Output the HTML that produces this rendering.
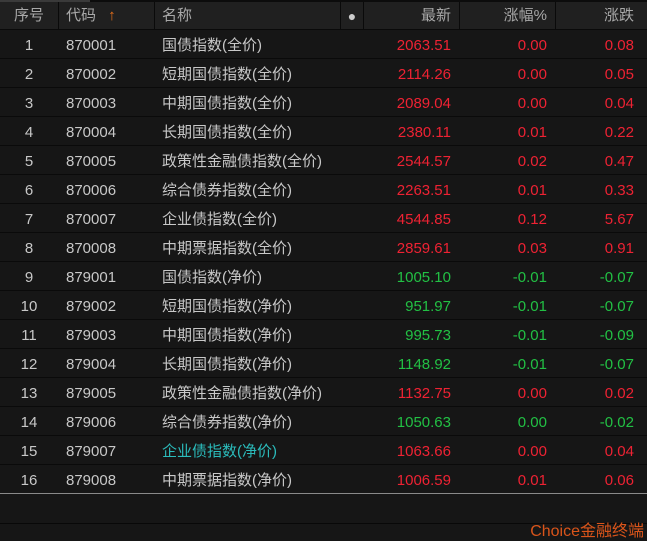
<!DOCTYPE html><html><head><meta charset="utf-8"><style>
*{margin:0;padding:0;box-sizing:border-box}
body{width:647px;height:539px;background:#161616;overflow:hidden;position:relative;font-family:"Liberation Sans","Noto Sans CJK SC",sans-serif;font-size:15px;color:#c8c8c8}
.top{position:absolute;left:0;top:0;width:647px;height:2px;background:#0c0c0c}
.top i{position:absolute;left:0;top:0;width:90px;height:2px;background:#3a3a3a}
.hd{position:absolute;left:0;top:2px;width:647px;height:28px;background:#202020;border-bottom:1px solid #0a0a0a;color:#a8a8a8}
.hd div{position:absolute;top:0;height:27px;line-height:28px;border-right:1px solid #0a0a0a}
.r{position:absolute;left:0;width:647px;height:29px;line-height:31px;border-bottom:1px solid #0a0a0a}
.r span{position:absolute;top:0}
.a{left:0;width:58px;text-align:center}
.b{left:66px}
.c{left:162px}
.d{right:196px}
.e{right:100px}
.f{right:13px}
.R{color:#ee2233}.G{color:#22c044}.T{color:#2bbcbc}
</style></head><body>
<div class="top"><i></i></div>
<div class="hd">
<div style="left:0;width:59px;text-align:center">序号</div>
<div style="left:59px;width:96px;padding-left:7px">代码 <span style="color:#e8701a;margin-left:8px">↑</span></div>
<div style="left:155px;width:186px;padding-left:7px">名称</div>
<div style="left:341px;width:23px;text-align:center;font-size:14px;color:#ccc">●</div>
<div style="left:364px;width:96px;text-align:right;padding-right:8px">最新</div>
<div style="left:460px;width:96px;text-align:right;padding-right:8px">涨幅%</div>
<div style="left:556px;width:91px;text-align:right;padding-right:13px;border-right:none">涨跌</div>
</div>
<div class="r" style="top:30px"><span class="a">1</span><span class="b">870001</span><span class="c">国债指数(全价)</span><span class="d R">2063.51</span><span class="e R">0.00</span><span class="f R">0.08</span></div>
<div class="r" style="top:59px"><span class="a">2</span><span class="b">870002</span><span class="c">短期国债指数(全价)</span><span class="d R">2114.26</span><span class="e R">0.00</span><span class="f R">0.05</span></div>
<div class="r" style="top:88px"><span class="a">3</span><span class="b">870003</span><span class="c">中期国债指数(全价)</span><span class="d R">2089.04</span><span class="e R">0.00</span><span class="f R">0.04</span></div>
<div class="r" style="top:117px"><span class="a">4</span><span class="b">870004</span><span class="c">长期国债指数(全价)</span><span class="d R">2380.11</span><span class="e R">0.01</span><span class="f R">0.22</span></div>
<div class="r" style="top:146px"><span class="a">5</span><span class="b">870005</span><span class="c">政策性金融债指数(全价)</span><span class="d R">2544.57</span><span class="e R">0.02</span><span class="f R">0.47</span></div>
<div class="r" style="top:175px"><span class="a">6</span><span class="b">870006</span><span class="c">综合债券指数(全价)</span><span class="d R">2263.51</span><span class="e R">0.01</span><span class="f R">0.33</span></div>
<div class="r" style="top:204px"><span class="a">7</span><span class="b">870007</span><span class="c">企业债指数(全价)</span><span class="d R">4544.85</span><span class="e R">0.12</span><span class="f R">5.67</span></div>
<div class="r" style="top:233px"><span class="a">8</span><span class="b">870008</span><span class="c">中期票据指数(全价)</span><span class="d R">2859.61</span><span class="e R">0.03</span><span class="f R">0.91</span></div>
<div class="r" style="top:262px"><span class="a">9</span><span class="b">879001</span><span class="c">国债指数(净价)</span><span class="d G">1005.10</span><span class="e G">-0.01</span><span class="f G">-0.07</span></div>
<div class="r" style="top:291px"><span class="a">10</span><span class="b">879002</span><span class="c">短期国债指数(净价)</span><span class="d G">951.97</span><span class="e G">-0.01</span><span class="f G">-0.07</span></div>
<div class="r" style="top:320px"><span class="a">11</span><span class="b">879003</span><span class="c">中期国债指数(净价)</span><span class="d G">995.73</span><span class="e G">-0.01</span><span class="f G">-0.09</span></div>
<div class="r" style="top:349px"><span class="a">12</span><span class="b">879004</span><span class="c">长期国债指数(净价)</span><span class="d G">1148.92</span><span class="e G">-0.01</span><span class="f G">-0.07</span></div>
<div class="r" style="top:378px"><span class="a">13</span><span class="b">879005</span><span class="c">政策性金融债指数(净价)</span><span class="d R">1132.75</span><span class="e R">0.00</span><span class="f R">0.02</span></div>
<div class="r" style="top:407px"><span class="a">14</span><span class="b">879006</span><span class="c">综合债券指数(净价)</span><span class="d G">1050.63</span><span class="e G">0.00</span><span class="f G">-0.02</span></div>
<div class="r" style="top:436px"><span class="a">15</span><span class="b">879007</span><span class="c T">企业债指数(净价)</span><span class="d R">1063.66</span><span class="e R">0.00</span><span class="f R">0.04</span></div>
<div class="r" style="top:465px;border-bottom:1px solid #8a8a8a;height:29px"><span class="a">16</span><span class="b">879008</span><span class="c">中期票据指数(净价)</span><span class="d R">1006.59</span><span class="e R">0.01</span><span class="f R">0.06</span></div>
<div style="position:absolute;left:0;top:523px;width:647px;height:1px;background:#080808"></div>
<div style="position:absolute;right:3px;top:517px;font-size:16px;color:#d9541a">Choice金融终端</div>
</body></html>
